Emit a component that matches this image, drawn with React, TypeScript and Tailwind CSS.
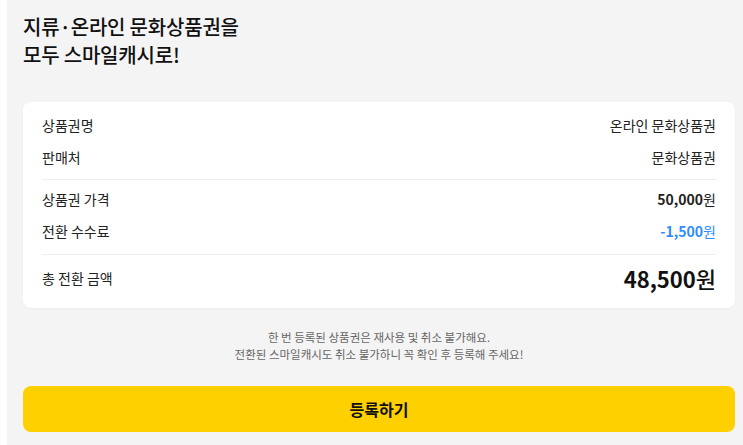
import React from "react";

const font = {
  fontFamily: '"Noto Sans CJK KR", "Noto Sans", sans-serif',
};

type RowProps = {
  label: string;
  value: React.ReactNode;
  className?: string;
};

function Row({ label, value, className = "" }: RowProps) {
  return (
    <div className={`flex h-5 items-center justify-between ${className}`}>
      <span className="text-[14px] text-[#222]">{label}</span>
      <span className="text-[14px] text-[#222]">{value}</span>
    </div>
  );
}

function Won({ amount, color = "text-[#222]" }: { amount: string; color?: string }) {
  return (
    <span className={`${color} text-[14px]`}>
      <span className="font-bold">{amount}</span>
      <span className="font-normal">원</span>
    </span>
  );
}

export default function App() {
  return (
    <div style={font} className="min-h-[445px] bg-white">
      <div className="ml-[7px] min-h-[445px] bg-[#f4f4f4] pl-4 pr-2">
        <h1 className="pt-[13px] text-[20px] font-medium leading-[28px] tracking-[-0.01em] text-[#111]">
          지류·온라인 문화상품권을
          <br />
          모두 스마일캐시로!
        </h1>

        <div className="mt-[33px] rounded-lg bg-white px-[19px] pb-4 pt-[13px] shadow-[0_1px_2px_rgba(0,0,0,0.03)]">
          <div className="flex flex-col gap-3">
            <Row label="상품권명" value="온라인 문화상품권" />
            <Row label="판매처" value="문화상품권" />
          </div>
          <div className="mb-[9px] mt-3 h-px bg-[#eeeeee]" />
          <div className="flex flex-col gap-3">
            <Row label="상품권 가격" value={<Won amount="50,000" />} />
            <Row label="전환 수수료" value={<Won amount="-1,500" color="text-[#2f8cff]" />} />
          </div>
          <div className="mb-[9px] mt-[13px] h-px bg-[#eeeeee]" />
          <div className="flex h-7 items-center justify-between">
            <span className="text-[14px] text-[#222]">총 전환 금액</span>
            <span className="text-[22px] text-[#111]">
              <span className="font-bold">48,500</span>
              <span className="font-medium">원</span>
            </span>
          </div>
        </div>

        <p className="mt-[21px] text-center text-[11.5px] leading-[17px] text-[#666]">
          한 번 등록된 상품권은 재사용 및 취소 불가해요.
          <br />
          전환된 스마일캐시도 취소 불가하니 꼭 확인 후 등록해 주세요!
        </p>

        <button
          type="button"
          className="mt-[23px] flex h-[46px] w-full items-center justify-center rounded-lg bg-[#ffd000] text-[16px] font-bold text-[#111]"
        >
          등록하기
        </button>
      </div>
    </div>
  );
}
